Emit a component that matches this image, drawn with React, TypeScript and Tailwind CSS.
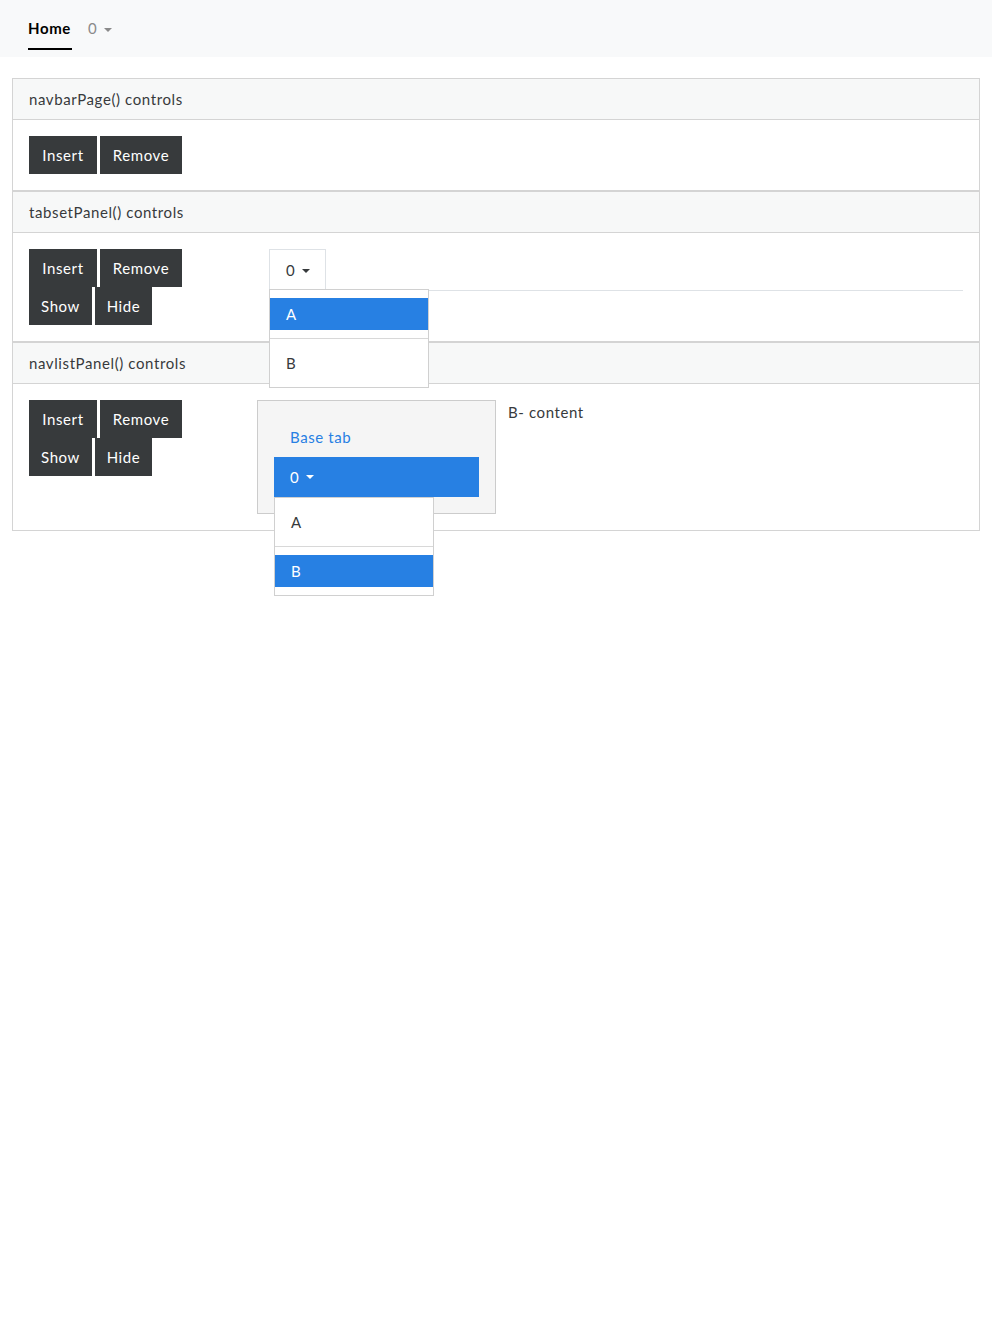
import React from 'react';

const Caret: React.FC<{ color?: string }> = ({ color = 'border-t-[#373a3c]' }) => (
  <span className={`ml-[7px] inline-block h-0 w-0 border-x-[4px] border-t-[4px] border-x-transparent align-middle ${color}`} />
);

const Btn: React.FC<{ children: React.ReactNode; w: string }> = ({ children, w }) => (
  <button className={`h-[38px] bg-[#373a3c] text-center text-[15px] leading-[38px] text-white ${w}`}>{children}</button>
);

const Controls: React.FC<{ full?: boolean }> = ({ full }) => (
  <div className="flex flex-col">
    <div className="flex gap-[3px]">
      <Btn w="w-[68px]">Insert</Btn>
      <Btn w="w-[82px]">Remove</Btn>
    </div>
    {full && (
      <div className="flex gap-[3px]">
        <Btn w="w-[63px]">Show</Btn>
        <Btn w="w-[57px]">Hide</Btn>
      </div>
    )}
  </div>
);

const Menu: React.FC<{ active: 'A' | 'B'; className?: string }> = ({ active, className }) => (
  <div className={`absolute z-10 w-[160px] border border-[#d0d0d0] bg-white py-2 text-[#373a3c] ${className ?? ''}`}>
    <div className={`h-[32px] px-4 leading-[32px] ${active === 'A' ? 'bg-[#2780e3] text-white' : ''}`}>A</div>
    <div className="my-2 h-px bg-[#d8d8d8]" />
    <div className={`h-[32px] px-4 leading-[32px] ${active === 'B' ? 'bg-[#2780e3] text-white' : ''}`}>B</div>
  </div>
);

const Card: React.FC<{ title: string; children: React.ReactNode }> = ({ title, children }) => (
  <div className="border border-[#d4d4d4]">
    <div className="flex h-[41px] items-center border-b border-[#d4d4d4] bg-[#f7f8f8] px-4">{title}</div>
    <div className="p-4">{children}</div>
  </div>
);

export default function App() {
  return (
    <div className="min-h-screen bg-white font-['Lato',sans-serif] text-[15px] tracking-[0.6px] text-[#373a3c]">
      <nav className="flex h-[57px] items-start gap-4 bg-[#f8f9fa] px-7 pt-[19px]">
        <span className="w-[44px] border-b-2 border-black pb-[10px] font-bold leading-[19px] text-black">Home</span>
        <span className="leading-[19px] text-[#8a8a8a]">
          0
          <Caret color="border-t-[#8a8a8a]" />
        </span>
      </nav>

      <main className="px-3 pt-[21px]">
        <Card title="navbarPage() controls">
          <Controls />
        </Card>

        <Card title="tabsetPanel() controls">
          <div className="flex">
            <div className="w-[240px]">
              <Controls full />
            </div>
            <div className="relative flex-1">
              <div className="flex h-[42px] border-b border-[#dee2e6]">
                <div className="relative -mb-px flex h-[42px] w-[57px] items-center border border-b-0 border-[#dee2e6] bg-white px-4">
                  0
                  <Caret />
                  <Menu active="A" className="-left-px top-[39px]" />
                </div>
              </div>
            </div>
          </div>
        </Card>

        <Card title="navlistPanel() controls">
          <div className="flex items-start">
            <div className="w-[228px]">
              <Controls full />
            </div>
            <div className="w-[239px] border border-[#cccccc] bg-[#f5f5f5] p-4">
              <div className="flex h-[40px] items-center px-4 text-[#2780e3]">Base tab</div>
              <div className="relative flex h-[40px] items-center bg-[#2780e3] px-4 text-white">
                0
                <Caret color="border-t-white" />
                <Menu active="B" className="left-0 top-[40px]" />
              </div>
            </div>
            <div className="ml-[12px] leading-[24px]">B- content</div>
          </div>
        </Card>
      </main>
    </div>
  );
}
